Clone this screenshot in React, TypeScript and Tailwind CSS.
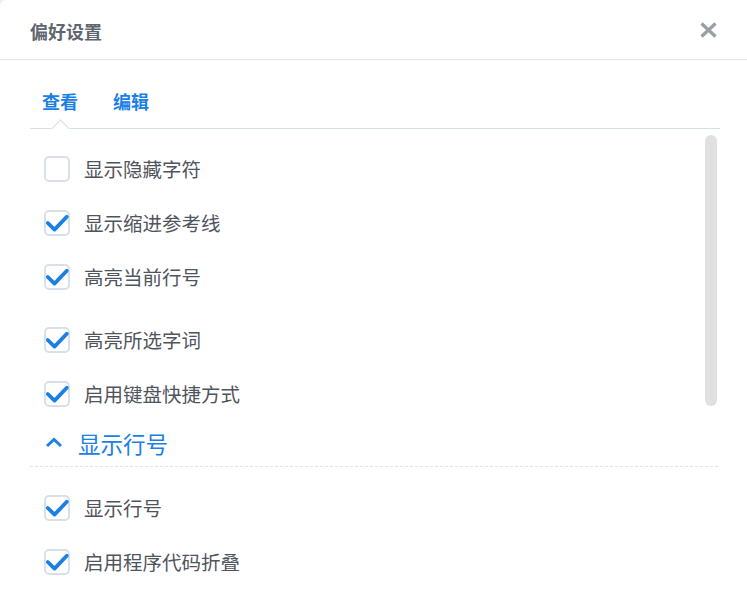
import React from "react";

const font = { fontFamily: '"Noto Sans CJK SC", "Noto Sans", sans-serif' };

function Check({ checked }: { checked: boolean }) {
  return (
    <div className="relative w-[26px] h-[26px] shrink-0 rounded-[5px] border-2 border-[#d9e0ea] bg-white">
      {checked && (
        <svg
          className="absolute left-[-2px] top-[-2px]"
          width="26"
          height="26"
          viewBox="0 0 26 26"
          fill="none"
        >
          <path
            d="M3.8 13 L10.5 19.6 L22.8 6.8"
            stroke="#1a80e5"
            strokeWidth="3.8"
            strokeLinecap="round"
            strokeLinejoin="round"
          />
        </svg>
      )}
    </div>
  );
}

function Row({ label, checked = true }: { label: string; checked?: boolean }) {
  return (
    <div className="flex items-center h-[54px] pl-[14px]">
      <Check checked={checked} />
      <span className="ml-[14px] text-[19.5px] leading-none text-[#50555d]">{label}</span>
    </div>
  );
}

export default function App() {
  return (
    <div className="w-[747px] h-[600px] bg-[#eeeeee] overflow-hidden" style={font}>
      <div className="relative w-full h-full bg-white rounded-tl-[6px] overflow-hidden">
        {/* Header */}
        <div className="flex items-center justify-between h-[60px] border-b border-[#e3e6ea] pl-[30px] pr-[30px]">
          <span className="text-[18px] font-bold text-[#5f6670] leading-none mt-[2px]">偏好设置</span>
          <svg width="17" height="16" viewBox="0 0 17 16" className="mt-[1px]">
            <path d="M1.5 1.5 L15.5 14.5 M15.5 1.5 L1.5 14.5" stroke="#9a9fa6" strokeWidth="3.3" strokeLinecap="butt" />
          </svg>
        </div>

        {/* Tabs */}
        <div className="relative mx-[30px] mr-[27px] h-[69px] border-b border-[#d4e0ec] flex items-center">
          <span className="ml-[12px] mt-[14px] text-[18px] font-bold text-[#1a80e5] leading-none">查看</span>
          <span className="ml-[35px] mt-[14px] text-[18px] font-bold text-[#1a80e5] leading-none">编辑</span>
          <div className="absolute left-[24px] bottom-[-7px] w-[13px] h-[13px] bg-white border-l border-t border-[#d4e0ec] rotate-45" />
        </div>

        {/* Content */}
        <div className="relative pl-[30px] pr-[27px] pt-[13px]">
          <Row label="显示隐藏字符" checked={false} />
          <Row label="显示缩进参考线" />
          <Row label="高亮当前行号" />
          <div className="h-[9px]" />
          <Row label="高亮所选字词" />
          <Row label="启用键盘快捷方式" />

          <div className="relative flex items-center h-[46px] pl-[15px]">
            <svg width="18" height="11" viewBox="0 0 18 11" fill="none" className="mb-[3px]">
              <path d="M2 9 L9 2.5 L16 9" stroke="#1a80e5" strokeWidth="3" strokeLinejoin="miter" />
            </svg>
            <span className="ml-[15px] mb-[1px] text-[22.5px] leading-none text-[#1a80e5]">显示行号</span>
            <div className="absolute left-0 right-0 bottom-0 h-px bg-[repeating-linear-gradient(to_right,#dfe4ea_0,#dfe4ea_3px,transparent_3px,transparent_5px)]" />
          </div>

          <div className="h-[14px]" />
          <Row label="显示行号" />
          <Row label="启用程序代码折叠" />
        </div>

        {/* Scrollbar thumb */}
        <div className="absolute left-[705px] top-[135px] w-[12px] h-[271px] rounded-full bg-[#e0e0e0]" />
      </div>
    </div>
  );
}
